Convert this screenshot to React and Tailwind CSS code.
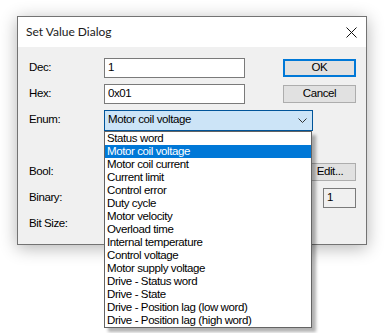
import React from 'react';

const items = [
  'Status word',
  'Motor coil voltage',
  'Motor coil current',
  'Current limit',
  'Control error',
  'Duty cycle',
  'Motor velocity',
  'Overload time',
  'Internal temperature',
  'Control voltage',
  'Motor supply voltage',
  'Drive - Status word',
  'Drive - State',
  'Drive - Position lag (low word)',
  'Drive - Position lag (high word)',
];

const selected = 'Motor coil voltage';

const Row = ({ label, children }) => (
  <div className="flex h-[26px] items-center pr-[10px]">
    <div className="w-[75px] shrink-0">{label}</div>
    {children}
  </div>
);

const TextBox = ({ value, className }) => (
  <div className={`flex h-[20px] items-center border border-[#7a7a7a] px-[3px] ${className}`}>
    {value}
  </div>
);

const Button = ({ children, primary, className = '' }) => (
  <div
    className={`flex items-center justify-center bg-[#e1e1e1] ${
      primary ? 'border-2 border-[#0078d7]' : 'border border-[#adadad]'
    } ${className}`}
  >
    {children}
  </div>
);

export default function App() {
  return (
    <div className="min-h-[333px] bg-white pl-[17px] pt-[16px] text-[11.5px] tracking-[-0.4px] text-black [font-family:'Liberation_Sans',Arial,sans-serif]">
      <div className="w-[350px] border border-[#737373] bg-[#f0f0f0] shadow-[0_3px_16px_rgba(0,0,0,0.3)]">
        {/* title bar */}
        <div className="flex h-[30px] items-center justify-between bg-white pl-[8px] pr-[9px]">
          <span className="text-[12px] tracking-normal text-[#1a1a1a] [font-family:Lato,sans-serif]">Set Value Dialog</span>
          <svg width="11" height="11" viewBox="0 0 11 11" className="mt-[1px]">
            <path d="M0.5 0.5 L10.5 10.5 M10.5 0.5 L0.5 10.5" stroke="#111" strokeWidth="1" />
          </svg>
        </div>

        <div className="pl-[11px] pt-[8px] pb-[7px]">
          <Row label="Dec:">
            <TextBox value="1" className="w-[141px] bg-white" />
            <Button primary className="ml-auto h-[18px] w-[73px]">OK</Button>
          </Row>
          <Row label="Hex:">
            <TextBox value="0x01" className="w-[141px] bg-white" />
            <Button className="ml-auto h-[18px] w-[73px]">Cancel</Button>
          </Row>
          <Row label="Enum:">
            <div className="relative">
              <div className="flex h-[21px] w-[209px] items-center justify-between border border-[#005499] bg-[#cce4f7] pl-[3px] pr-[5px]">
                <span>{selected}</span>
                <svg width="9" height="5" viewBox="0 0 9 5">
                  <path d="M0.5 0.5 L4.5 4.5 L8.5 0.5" fill="none" stroke="#333" strokeWidth="1" />
                </svg>
              </div>
              {/* open list */}
              <div className="absolute left-0 top-full z-10 w-[208px] border border-[#646464] bg-white shadow-[4px_4px_3px_rgba(0,0,0,0.3)]">
                {items.map((it) => (
                  <div
                    key={it}
                    className={`h-[13px] pl-[2px] leading-[13px] ${
                      it === selected ? 'bg-[#0078d7] text-white' : ''
                    }`}
                  >
                    {it}
                  </div>
                ))}
              </div>
            </div>
          </Row>
          <Row label="" />
          <Row label="Bool:">
            <Button className="ml-auto h-[18px] w-[52px]">Edit...</Button>
          </Row>
          <Row label="Binary:">
            <TextBox value="1" className="ml-auto w-[33px] bg-[#f0f0f0]" />
          </Row>
          <Row label="Bit Size:" />
        </div>
      </div>
    </div>
  );
}
